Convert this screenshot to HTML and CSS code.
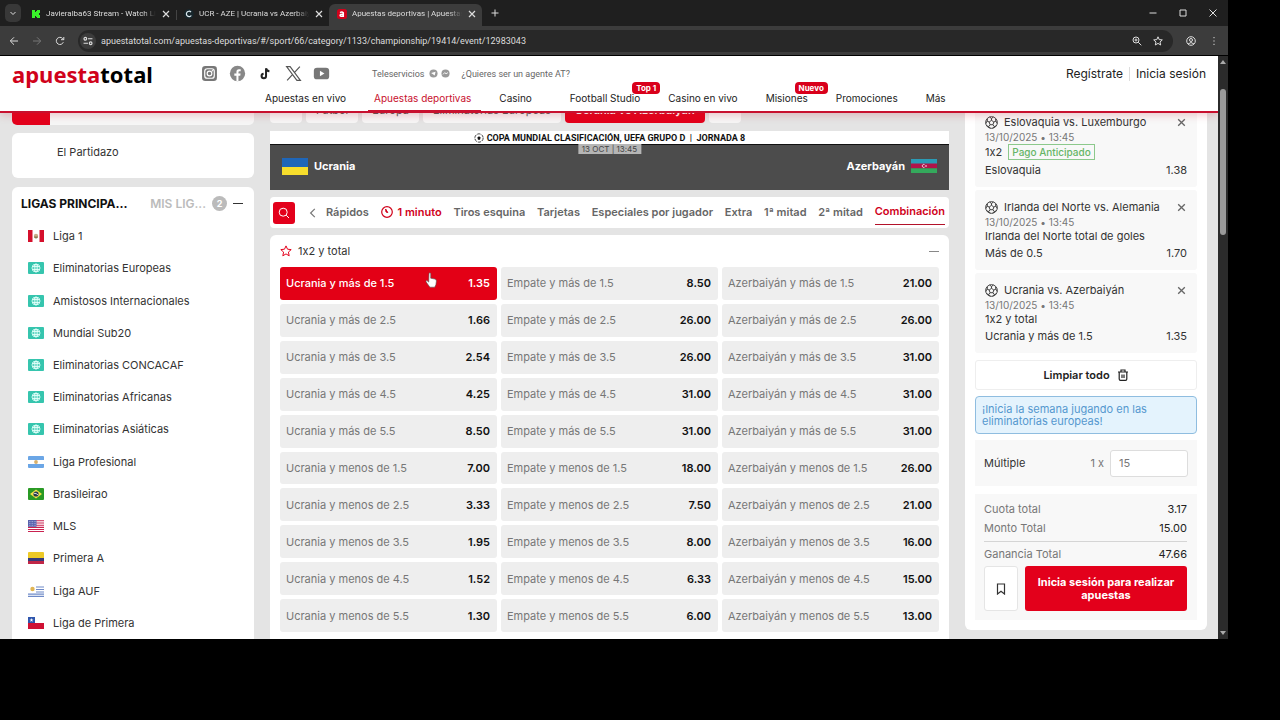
FILE: index.html
```html
<!doctype html>
<html lang="es">
  <head>
    <meta charset="UTF-8" />
    <meta name="viewport" content="width=device-width, initial-scale=1.0" />
    <title>Apuestas deportivas | Apuesta Total</title>
    <link rel="stylesheet" href="styles.css">
  </head>
  <body>
    <!-- shared icons -->
    <svg class="sprite" aria-hidden="true">
      <symbol id="x" viewBox="0 0 10 10"><path d="M2 2l6 6M8 2l-6 6" fill="none" stroke="currentColor" stroke-width="1.2" /></symbol>
      <symbol id="ball" viewBox="0 0 24 24">
        <g fill="none" stroke="currentColor" stroke-width="1.7">
          <circle cx="12" cy="12" r="10.8" />
          <path d="M12 8l4.300 3.100-1.600 5h-5.400l-1.600-5zM12 8V4.500M16.300 11.100l3.700-1.600M14.700 16.100l2.600 3.400M9.300 16.100l-2.600 3.400M7.700 11.100L4 9.500M12 4.500L8.500 2M12 4.500L15.500 2M20 9.500L19.500 5M20 9.500l2.500 4M17.300 19.500l3.700-1.500M17.300 19.500l-3.300 3M6.700 19.500L3 18M6.700 19.500l3.300 3M4 9.500L4.500 5M4 9.500l-2.500 4" />
        </g>
      </symbol>
      <symbol id="world" viewBox="0 0 16 12">
        <rect width="16" height="12" rx="1" fill="#36c5ae" />
        <g fill="none" stroke="#e2fff9" stroke-width=".9"><circle cx="8" cy="6" r="4" /><ellipse cx="8" cy="6" rx="1.800" ry="4" /><path d="M4.500 4.500h7M4.500 7.500h7M8 2v8" /></g>
      </symbol>
      <symbol id="peru" viewBox="0 0 16 12"><rect width="16" height="12" rx="1" fill="#fff" /><path d="M0 0h4.500v12H0zM11.500 0H16v12h-4.500z" fill="#d5102c" /><circle cx="8" cy="6" r="2.200" fill="#c9ad8a" /><path d="M6 6.500a2 2 0 0 0 4 0z" fill="#8a7a52" /></symbol>
      <symbol id="argentina" viewBox="0 0 16 12"><rect width="16" height="12" rx="1" fill="#6ba6e6" /><path d="M0 4h16v4H0z" fill="#fff" /><circle cx="8" cy="6" r="1.900" fill="#d8b06a" /></symbol>
      <symbol id="brasil" viewBox="0 0 16 12"><rect width="16" height="12" rx="1" fill="#299a25" /><path d="M8 1.500L14 6l-6 4.500L2 6z" fill="#efe046" /><circle cx="8" cy="6" r="2.600" fill="#263c4c" /><path d="M5.800 5.300q2.500-.3 4.400 1.700" stroke="#fff" stroke-width=".8" fill="none" /></symbol>
      <symbol id="usa" viewBox="0 0 16 12"><rect width="16" height="12" rx="1" fill="#fff" /><path d="M0 .8h16M0 3h16M0 5.200h16M0 7.400h16M0 9.500h16M0 11.500h16" stroke="#c92250" stroke-width="1.100" /><path d="M0 0h8.500v6.800H0z" fill="#5963ae" /><path d="M1 1.500h7M1 3.400h7M1 5.300h7" stroke="#c9cdee" stroke-width=".7" stroke-dasharray=".8 .8" /></symbol>
      <symbol id="colombia" viewBox="0 0 16 12"><rect width="16" height="12" rx="1" fill="#edc927" /><path d="M0 6h16v3H0z" fill="#343b7c" /><path d="M0 9h16v3H0z" fill="#c02647" /></symbol>
      <symbol id="uruguay" viewBox="0 0 16 12"><rect width="16" height="12" rx="1" fill="#fff" /><path d="M8 2h8M8 4.500h8M8 7h8M0 9.200h16M0 11.300h16" stroke="#6f8ac8" stroke-width="1.200" /><circle cx="4.500" cy="4" r="2.200" fill="#e1b655" /></symbol>
      <symbol id="chile" viewBox="0 0 16 12"><rect width="16" height="12" rx="1" fill="#fff" /><path d="M0 6h16v6H0z" fill="#cf1133" /><path d="M0 0h7v6H0z" fill="#2f56ad" /><path d="M3.500 1l.5 1.400h1.500l-1.200.9.500 1.500-1.300-.9-1.300.9.500-1.500-1.200-.9H3z" fill="#fff" /></symbol>
    </svg>

    <div class="browser">
      <div class="tabs">
        <button class="tab-menu" aria-label="Buscar pestañas"><svg viewBox="0 0 10 10"><path d="M2.500 4L5 6.500 7.500 4" /></svg></button>
        <div class="tab">
          <svg class="favicon" viewBox="0 0 10 10"><path d="M1 1h3v2h1V2h1V1h3v3H8v2h1v3H6V8H5V7H4v2H1z" fill="#39f12a" /></svg>
          <span>Javieralba63 Stream - Watch Live</span>
          <button aria-label="Cerrar"><svg><use href="#x" /></svg></button>
        </div>
        <div class="tab divided">
          <svg class="favicon" viewBox="0 0 10 10"><circle cx="5" cy="5" r="4.800" fill="#17262c" /><path d="M7 3a2.700 2.700 0 1 0 .3 3.500" fill="none" stroke="#dceaf0" stroke-width="1.200" /></svg>
          <span>UCR - AZE | Ucrania vs Azerbaiyán</span>
          <button aria-label="Cerrar"><svg><use href="#x" /></svg></button>
        </div>
        <div class="tab active">
          <svg class="favicon" viewBox="0 0 10 10"><rect width="10" height="10" rx="2.500" fill="#d0021b" /><path d="M3 3.600q2-1.200 3.300.1V8M6.200 5.200Q3 5 3.100 6.500T6.200 6.800" fill="none" stroke="#fff" stroke-width="1.500" /></svg>
          <span>Apuestas deportivas | Apuestas</span>
          <button aria-label="Cerrar"><svg><use href="#x" /></svg></button>
        </div>
        <button class="new-tab" aria-label="Nueva pestaña"><svg viewBox="0 0 10 10"><path d="M5 1.500v7M1.500 5h7" /></svg></button>
        <div class="window-controls">
          <button aria-label="Minimizar"><svg viewBox="0 0 10 10"><path d="M1.500 5h7" /></svg></button>
          <button aria-label="Maximizar"><svg viewBox="0 0 10 10"><path d="M2 2h6v6H2z" /></svg></button>
          <button aria-label="Cerrar ventana"><svg viewBox="0 0 10 10"><path d="M1.500 1.500l7 7M8.500 1.500l-7 7" /></svg></button>
        </div>
      </div>

      <div class="toolbar">
        <button aria-label="Atrás"><svg viewBox="0 0 10 10"><path d="M9 5H1.500M5 1.300L1.300 5 5 8.700" /></svg></button>
        <button class="off" aria-label="Adelante"><svg viewBox="0 0 10 10"><path d="M1 5h7.500M5 1.300L8.700 5 5 8.700" /></svg></button>
        <button aria-label="Recargar"><svg viewBox="0 0 10 10"><path d="M8.300 6.200A3.600 3.600 0 1 1 7.500 2.400L8.700 3.600M8.800 1v2.700H6" /></svg></button>
        <div class="address">
          <svg class="site-info" viewBox="0 0 18 18"><circle cx="9" cy="9" r="9" fill="#3c3c3c" /><g fill="none" stroke="#ddd" stroke-width="1.300"><circle cx="6" cy="6.500" r="1.500" /><path d="M9 6.500h5M4 11.500h5" /><circle cx="12" cy="11.500" r="1.500" /></g></svg>
          <input type="text" aria-label="Dirección" value="apuestatotal.com/apuestas-deportivas/#/sport/66/category/1133/championship/19414/event/12983043" />
          <button aria-label="Zoom"><svg viewBox="0 0 10 10"><circle cx="4" cy="4" r="3" /><path d="M6.200 6.200L9.300 9.300M2.500 4h3M4 2.500v3" /></svg></button>
          <button aria-label="Favorito"><svg viewBox="0 0 10 10"><path d="M5 .8l1.200 2.800 3.100.3L7 6l.7 3L5 7.400 2.300 9 3 6 .7 3.900l3.100-.3z" /></svg></button>
        </div>
        <button aria-label="Perfil"><svg viewBox="0 0 10 10"><circle cx="5" cy="5" r="4.300" /><circle cx="5" cy="4" r="1.500" /><path d="M2 8q3-3 6 0" /></svg></button>
        <button aria-label="Menú"><svg viewBox="0 0 10 10"><path d="M5 1v1.200M5 4.400v1.200M5 7.800V9" /></svg></button>
      </div>

      <div class="viewport">
        <div class="page">
          <header class="header">
            <div class="header-top">
              <a class="logo" href="#">apuesta<span>total</span></a>
              <div class="social">
                <a href="#" aria-label="Instagram"><svg viewBox="0 0 16 16"><rect x="1" y="1" width="14" height="14" rx="3" fill="#777" /><g fill="none" stroke="#fff" stroke-width="1.100"><rect x="3.500" y="3.500" width="9" height="9" rx="2.500" /><circle cx="8" cy="8" r="2.200" /></g><circle cx="10.700" cy="5.300" r=".7" fill="#fff" /></svg></a>
                <a href="#" aria-label="Facebook"><svg viewBox="0 0 16 16"><circle cx="8" cy="8" r="7.200" fill="#888" /><path d="M7 15.200V10H5V8h2V6.500Q7 4 9.300 4H11v1.800H9.700q-.8 0-.8.8V8h2l-.3 2H8.900v5.200z" fill="#fff" /></svg></a>
                <a href="#" aria-label="TikTok"><svg viewBox="0 0 16 16"><path d="M8.500 3v7.300a2.100 2.100 0 1 1-2.300-2.100M8.500 3Q9 5.600 11.700 5.900" fill="none" stroke="#222" stroke-width="1.900" /></svg></a>
                <a href="#" aria-label="X"><svg viewBox="0 0 16 16"><path d="M1.500 1.500h3.300l9.700 13h-3.300zM14 1.500L9 7M7 9l-5 5.500" fill="none" stroke="#555" stroke-width="1.100" /></svg></a>
                <a href="#" aria-label="YouTube"><svg viewBox="0 0 16 16"><rect x=".8" y="2.500" width="14.400" height="11" rx="3" fill="#777" /><path d="M6.500 5.500v5L10.800 8z" fill="#fff" /></svg></a>
              </div>
              <div class="services">
                <span>Teleservicios</span>
                <a href="#" aria-label="Telegram"><svg viewBox="0 0 10 10"><circle cx="5" cy="5" r="4.500" fill="#999" /><path d="M2.300 4.500l5-1.500-1 4.300-1.500-1.200z" fill="#fff" /></svg></a>
                <a href="#" aria-label="Messenger"><svg viewBox="0 0 10 10"><circle cx="5" cy="5" r="4.500" fill="#999" /><path d="M2.300 6l1.800-2 1.500 1.300L7.700 4" fill="none" stroke="#fff" /></svg></a>
                <a class="agent" href="#">¿Quieres ser un agente AT?</a>
              </div>
              <div class="auth">
                <a href="#">Regístrate</a>
                <a href="#">Inicia sesión</a>
              </div>
            </div>
            <nav class="nav">
              <a href="#">Apuestas en vivo</a>
              <a class="current" href="#">Apuestas deportivas</a>
              <a class="wide" href="#">Casino</a>
              <a href="#">Football Studio<em>Top 1</em></a>
              <a href="#">Casino en vivo</a>
              <a href="#">Misiones<em>Nuevo</em></a>
              <a href="#">Promociones</a>
              <a href="#">Más</a>
            </nav>
          </header>

          <main class="columns">
            <aside class="left">
              <div class="search-stub"></div>
              <a class="featured" href="#">El Partidazo</a>
              <section class="leagues">
                <div class="leagues-head">
                  <h2>LIGAS PRINCIPA...</h2>
                  <h2 class="muted">MIS LIG...</h2>
                  <span class="count">2</span>
                  <button class="collapse" aria-label="Contraer"></button>
                </div>
                <ul>
                  <li><a href="#"><svg><use href="#peru" /></svg>Liga 1</a></li>
                  <li><a href="#"><svg><use href="#world" /></svg>Eliminatorias Europeas</a></li>
                  <li><a href="#"><svg><use href="#world" /></svg>Amistosos Internacionales</a></li>
                  <li><a href="#"><svg><use href="#world" /></svg>Mundial Sub20</a></li>
                  <li><a href="#"><svg><use href="#world" /></svg>Eliminatorias CONCACAF</a></li>
                  <li><a href="#"><svg><use href="#world" /></svg>Eliminatorias Africanas</a></li>
                  <li><a href="#"><svg><use href="#world" /></svg>Eliminatorias Asiáticas</a></li>
                  <li><a href="#"><svg><use href="#argentina" /></svg>Liga Profesional</a></li>
                  <li><a href="#"><svg><use href="#brasil" /></svg>Brasileirao</a></li>
                  <li><a href="#"><svg><use href="#usa" /></svg>MLS</a></li>
                  <li><a href="#"><svg><use href="#colombia" /></svg>Primera A</a></li>
                  <li><a href="#"><svg><use href="#uruguay" /></svg>Liga AUF</a></li>
                  <li><a href="#"><svg><use href="#chile" /></svg>Liga de Primera</a></li>
                </ul>
              </section>
            </aside>

            <section class="center">
              <div class="crumbs">
                <a href="#">‹</a>
                <a href="#">Fútbol</a>
                <a href="#">Europa</a>
                <a href="#">Eliminatorias Europeas</a>
                <a class="current" href="#">Ucrania vs Azerbaiyán</a>
                <a href="#" aria-label="Más eventos"></a>
              </div>

              <div class="match">
                <div class="competition">
                  <svg viewBox="0 0 12 12"><circle cx="6" cy="6" r="5" fill="none" stroke="#222" stroke-dasharray="4 1.200" /><path d="M6 4l2 1.500L7.200 8H4.800L4 5.500z" fill="#111" /></svg>
                  COPA MUNDIAL CLASIFICACIÓN, UEFA GRUPO D &nbsp;|&nbsp; JORNADA 8
                </div>
                <div class="teams">
                  <svg viewBox="0 0 26 17"><path d="M0 0h26v9H0z" fill="#1f66b8" /><path d="M0 9h26v8H0z" fill="#f7dd2c" /></svg>
                  <strong>Ucrania</strong>
                  <time>13 OCT | 13:45</time>
                  <strong class="away">Azerbayán</strong>
                  <svg class="flag-az" viewBox="0 0 26 14"><path d="M0 0h26v5H0z" fill="#2b9bb5" /><path d="M0 4.500h26v5H0z" fill="#b01349" /><path d="M0 9.300h26V14H0z" fill="#34a95c" /><path d="M13.500 5.600a1.500 1.500 0 1 0 0 2.600" fill="none" stroke="#fff" stroke-width=".8" /><circle cx="15" cy="7" r=".8" fill="#fff" /></svg>
                </div>
              </div>

              <div class="markets">
                <button class="search" aria-label="Buscar"><svg viewBox="0 0 12 12"><circle cx="5.200" cy="5.200" r="4" /><path d="M8.200 8.200L11 11" /></svg></button>
                <button class="prev" aria-label="Anterior"><svg viewBox="0 0 10 10"><path d="M6.500 1.500L3 5l3.500 3.500" /></svg></button>
                <div class="market-tabs">
                  <button>Rápidos</button>
                  <button class="minute"><svg viewBox="0 0 12 12"><circle cx="6" cy="6" r="5.300" fill="none" stroke="currentColor" stroke-width="1.200" /><path d="M4.600 3l2.200 3.600L5 6z" fill="currentColor" stroke="currentColor" /></svg>1 minuto</button>
                  <button>Tiros esquina</button>
                  <button>Tarjetas</button>
                  <button>Especiales por jugador</button>
                  <button>Extra</button>
                  <button>1ª mitad</button>
                  <button>2ª mitad</button>
                  <button class="selected">Combinación</button>
                </div>
              </div>

              <section class="market">
                <div class="market-head">
                  <svg viewBox="0 0 12 12"><path d="M6 .9l1.500 3.300 3.700.4-2.800 2.500.8 3.700L6 8.900l-3.200 1.900.8-3.700L.8 4.600l3.700-.4z" fill="none" stroke="#e3001b" stroke-linejoin="round" /></svg>
                  <h3>1x2 y total</h3>
                  <button class="collapse" aria-label="Contraer"></button>
                </div>
                <div class="odds">
                  <button class="picked">Ucrania y más de 1.5 <b>1.35</b></button>
                  <button>Empate y más de 1.5 <b>8.50</b></button>
                  <button>Azerbaiyán y más de 1.5 <b>21.00</b></button>

                  <button>Ucrania y más de 2.5 <b>1.66</b></button>
                  <button>Empate y más de 2.5 <b>26.00</b></button>
                  <button>Azerbaiyán y más de 2.5 <b>26.00</b></button>

                  <button>Ucrania y más de 3.5 <b>2.54</b></button>
                  <button>Empate y más de 3.5 <b>26.00</b></button>
                  <button>Azerbaiyán y más de 3.5 <b>31.00</b></button>

                  <button>Ucrania y más de 4.5 <b>4.25</b></button>
                  <button>Empate y más de 4.5 <b>31.00</b></button>
                  <button>Azerbaiyán y más de 4.5 <b>31.00</b></button>

                  <button>Ucrania y más de 5.5 <b>8.50</b></button>
                  <button>Empate y más de 5.5 <b>31.00</b></button>
                  <button>Azerbaiyán y más de 5.5 <b>31.00</b></button>

                  <button>Ucrania y menos de 1.5 <b>7.00</b></button>
                  <button>Empate y menos de 1.5 <b>18.00</b></button>
                  <button>Azerbaiyán y menos de 1.5 <b>26.00</b></button>

                  <button>Ucrania y menos de 2.5 <b>3.33</b></button>
                  <button>Empate y menos de 2.5 <b>7.50</b></button>
                  <button>Azerbaiyán y menos de 2.5 <b>21.00</b></button>

                  <button>Ucrania y menos de 3.5 <b>1.95</b></button>
                  <button>Empate y menos de 3.5 <b>8.00</b></button>
                  <button>Azerbaiyán y menos de 3.5 <b>16.00</b></button>

                  <button>Ucrania y menos de 4.5 <b>1.52</b></button>
                  <button>Empate y menos de 4.5 <b>6.33</b></button>
                  <button>Azerbaiyán y menos de 4.5 <b>15.00</b></button>

                  <button>Ucrania y menos de 5.5 <b>1.30</b></button>
                  <button>Empate y menos de 5.5 <b>6.00</b></button>
                  <button>Azerbaiyán y menos de 5.5 <b>13.00</b></button>
                </div>
              </section>
            </section>

            <aside class="slip">
              <article class="bet">
                <h4><svg><use href="#ball" /></svg>Eslovaquia vs. Luxemburgo<button aria-label="Quitar"><svg><use href="#x" /></svg></button></h4>
                <time>13/10/2025 • 13:45</time>
                <p>1x2 <span class="early">Pago Anticipado</span></p>
                <p class="pick">Eslovaquia <span>1.38</span></p>
              </article>
              <article class="bet">
                <h4><svg><use href="#ball" /></svg>Irlanda del Norte vs. Alemania<button aria-label="Quitar"><svg><use href="#x" /></svg></button></h4>
                <time>13/10/2025 • 13:45</time>
                <p>Irlanda del Norte total de goles</p>
                <p class="pick">Más de 0.5 <span>1.70</span></p>
              </article>
              <article class="bet">
                <h4><svg><use href="#ball" /></svg>Ucrania vs. Azerbaiyán<button aria-label="Quitar"><svg><use href="#x" /></svg></button></h4>
                <time>13/10/2025 • 13:45</time>
                <p>1x2 y total</p>
                <p class="pick">Ucrania y más de 1.5 <span>1.35</span></p>
              </article>

              <button class="clear">Limpiar todo
                <svg viewBox="0 0 12 12"><path d="M1 3h10M4 3V1h4v2M2.200 3v7q0 1.300 1.300 1.300h5q1.300 0 1.300-1.300V3M5 5.500v3.500M7 5.500v3.500" /></svg>
              </button>
              <p class="notice">¡Inicia la semana jugando en las eliminatorias europeas!</p>
              <div class="stake">
                <label for="stake">Múltiple</label>
                <span>1 x</span>
                <input type="text" id="stake" value="15" />
              </div>
              <div class="totals">
                <dl>
                  <div><dt>Cuota total</dt><dd>3.17</dd></div>
                  <div><dt>Monto Total</dt><dd>15.00</dd></div>
                  <div class="win"><dt>Ganancia Total</dt><dd>47.66</dd></div>
                </dl>
                <div class="actions">
                  <button class="save" aria-label="Guardar"><svg viewBox="0 0 12 12"><path d="M2.500 1h7v10L6 8.200 2.500 11z" /></svg></button>
                  <button class="submit">Inicia sesión para realizar apuestas</button>
                </div>
              </div>
            </aside>
          </main>
        </div>
        <div class="scrollbar"><i class="up"></i><div class="thumb"></div><i class="down"></i></div>
      </div>
    </div>

    <svg class="cursor" viewBox="0 0 12 16"><path d="M4 1.200q1-.8 1.700.2v4.800l4.300.9q1.500.4 1.400 2l-.5 3.600-1.200 2.500H4.900L1 9.800q-.3-1.300 1-1.200l1.700 1.500z" fill="#fff" stroke="#555" stroke-width=".6" /></svg>
  </body>
</html>
```

FILE: styles.css
```css
* {
  box-sizing: border-box;
}

body {
  margin: 0;
  height: 100vh;
  padding: 0 52px 81px 0;
  background-color: #000;
  font-family: Inter, "Liberation Sans", sans-serif;
  font-size: 11px;
  line-height: 14px;
  font-feature-settings: "calt" 0;
  color: #333;
}

h2, h3, h4, p, ul, dl, dd {
  margin: 0;
  padding: 0;
}

a {
  color: inherit;
  text-decoration: none;
}

button {
  display: flex;
  align-items: center;
  justify-content: center;
  padding: 0;
  border: none;
  background: none;
  color: inherit;
  font: inherit;
  font-feature-settings: inherit;
  cursor: pointer;
}

svg {
  display: block;
  flex: none;
}

.sprite {
  position: absolute;
  width: 0;
  height: 0;
}

.browser {
  height: 100%;
  display: flex;
  flex-direction: column;
  overflow: hidden;
}

/* browser chrome */
.tabs, .toolbar {
  display: flex;
  align-items: center;
  flex: none;
  color: #ddd;
  font-family: Roboto, sans-serif;
}

.tabs svg, .toolbar svg {
  width: 10px;
  height: 10px;
  fill: none;
  stroke: currentColor;
}

.tabs .favicon {
  stroke: none;
}

.tabs {
  height: 26px;
  padding-left: 5px;
  background-color: #1f1f1f;
  font-size: 8px;
}

.tab-menu {
  width: 16px;
  height: 18px;
  margin-right: 2px;
  border-radius: 5px;
  background-color: #383838;
}

.tab {
  display: flex;
  align-items: center;
  gap: 5px;
  width: 153px;
  height: 22px;
  padding: 0 5px 2px 8px;
  align-self: flex-end;
}

.tab span {
  flex: 1;
  overflow: hidden;
  white-space: nowrap;
  mask-image: linear-gradient(to right, #000 88%, transparent);
}

.tab.divided {
  background: linear-gradient(#444, #444) left center / 1px 10px no-repeat;
}

.tab.active {
  background-color: #3c3c3c;
  border-radius: 6px 6px 0 0;
}

.new-tab {
  margin-left: 8px;
}

.window-controls {
  display: flex;
  gap: 20px;
  margin-left: auto;
  padding-right: 10px;
}

.toolbar {
  height: 30px;
  gap: 13px;
  padding: 0 9px;
  background-color: #3c3c3c;
  border-bottom: 1px solid #000;
  font-size: 9px;
}

.toolbar .off {
  color: #777;
}

.address {
  flex: 1;
  display: flex;
  align-items: center;
  gap: 11px;
  height: 22px;
  padding: 0 10px 0 2px;
  border-radius: 11px;
  background-color: #282828;
}

.address input {
  flex: 1;
  padding: 0;
  margin-left: -6px;
  border: none;
  background: none;
  color: #ddd;
  font: inherit;
}

.address .site-info {
  width: 16px;
  height: 16px;
  stroke: none;
}

.viewport {
  flex: 1;
  min-height: 0;
  display: flex;
}

.page {
  flex: 1;
  display: flex;
  flex-direction: column;
  overflow: hidden;
  background-color: #e4e4e4;
}

.scrollbar {
  width: 10px;
  display: flex;
  flex-direction: column;
  align-items: center;
  padding: 4px 0;
  background-color: #2b2b2b;
}

.thumb {
  width: 6px;
  height: 146px;
  margin: 25px 0 auto;
  border-radius: 3px;
  background-color: #9a9a9a;
}

.up, .down {
  border: 3px solid transparent;
  border-bottom: 4px solid #aaa;
  border-top: none;
}

.down {
  border-top: 4px solid #aaa;
  border-bottom: none;
}

/* site header */
.header {
  flex: none;
  position: relative;
  z-index: 1;
  height: 57px;
  padding: 0 12px;
  background-color: #fff;
  border-bottom: 2px solid #c8102e;
  box-shadow: 0 2px 8px rgba(200, 40, 50, 0.25);
}

.header-top {
  display: flex;
  align-items: center;
  height: 35px;
}

.logo {
  width: 189px;
  color: #d0021b;
  font-family: "Noto Sans", "Open Sans", sans-serif;
  font-size: 22px;
  font-weight: 700;
  line-height: 30px;
}

.logo span {
  color: #000;
}

.social {
  display: flex;
  gap: 11px;
}

.social svg {
  width: 17px;
  height: 17px;
}

.services {
  display: flex;
  align-items: center;
  gap: 3px;
  margin-left: 42px;
  color: #666;
  font-family: Roboto, sans-serif;
  font-size: 9px;
}

.services svg {
  width: 9px;
  height: 9px;
}

.services span {
  margin-right: 2px;
}

.agent {
  margin-left: 8px;
}

.auth {
  display: flex;
  margin-left: auto;
  font-size: 12px;
  color: #222;
}

.auth a + a {
  margin-left: 6px;
  padding-left: 6px;
  border-left: 1px solid #ddd;
}

.nav {
  display: flex;
  gap: 28px;
  padding-left: 253px;
  color: #222;
  font-size: 10px;
}

.nav a {
  position: relative;
  height: 20px;
}

.nav .current {
  color: #c8102e;
}

.nav .current::after {
  content: "";
  position: absolute;
  left: -6px;
  right: -10px;
  bottom: 0;
  height: 1px;
  background-color: #c8102e;
}

.nav .wide {
  margin-right: 10px;
}

.nav em {
  position: absolute;
  right: -20px;
  top: -9px;
  padding: 0 4px;
  border-radius: 4px;
  background-color: #d9001b;
  color: #fff;
  font-size: 8px;
  font-style: normal;
  font-weight: 700;
  line-height: 12px;
  white-space: nowrap;
}

/* page columns */
.columns {
  flex: 1;
  min-height: 0;
  display: grid;
  grid-template-columns: 242px 1fr 242px;
  grid-template-rows: 100%;
  gap: 16px;
  padding: 0 11px 0 12px;
}

.left, .center {
  display: flex;
  flex-direction: column;
  min-width: 0;
}

.search-stub {
  height: 12px;
  border-radius: 0 0 5px 5px;
  background: linear-gradient(to right, #e3001b 38px, #f6f6f6 38px);
}

.featured {
  height: 45px;
  margin: 8px 0 9px;
  padding: 12px 45px;
  border-radius: 6px;
  background-color: #fff;
}

.leagues {
  flex: 1;
  display: flex;
  flex-direction: column;
  border-radius: 6px 6px 0 0;
  background-color: #fff;
}

.leagues-head {
  display: flex;
  align-items: center;
  height: 33px;
  padding: 0 11px 0 9px;
}

.leagues-head h2 {
  flex: 1;
  white-space: nowrap;
  color: #111;
  font-size: 12px;
  font-weight: 700;
}

.leagues-head .muted {
  flex: none;
  color: #bbb;
  font-weight: 600;
}

.count {
  width: 15px;
  height: 15px;
  margin: 0 6px;
  border-radius: 50%;
  background-color: #bbb;
  color: #fff;
  font-size: 9px;
  font-weight: 700;
  line-height: 15px;
  text-align: center;
}

.collapse {
  width: 10px;
  height: 10px;
}

.collapse::before {
  content: "";
  width: 10px;
  height: 1px;
  background-color: currentColor;
}

.leagues ul {
  flex: 1;
  display: grid;
  grid-auto-rows: 1fr;
  list-style: none;
}

.leagues li a {
  display: flex;
  align-items: center;
  gap: 9px;
  height: 100%;
  padding-left: 16px;
}

.leagues li svg {
  width: 16px;
  height: 12px;
}

.crumbs {
  display: flex;
  align-items: flex-end;
  gap: 4px;
  height: 10px;
  overflow: hidden;
}

.crumbs a {
  flex: none;
  min-width: 32px;
  height: 24px;
  padding: 4px 10px;
  border-radius: 4px;
  background-color: #f6f6f6;
  color: #555;
  text-align: center;
}

.crumbs .current {
  background-color: #e3001b;
  color: #fff;
  font-weight: 600;
}

.match {
  margin-top: 8px;
}

.competition {
  display: flex;
  align-items: center;
  justify-content: center;
  gap: 3px;
  height: 13px;
  background-color: #fff;
  color: #111;
  font-family: Roboto, sans-serif;
  font-size: 9px;
  font-weight: 700;
}

.competition svg {
  width: 10px;
  height: 10px;
}

.teams {
  position: relative;
  display: flex;
  align-items: center;
  gap: 6px;
  height: 46px;
  padding: 0 12px 3px;
  border-top: 1px solid #111;
  background-color: #4c4c4c;
  color: #fff;
}

.teams svg {
  width: 26px;
  height: 17px;
}

.teams .flag-az {
  height: 14px;
}

.teams .away {
  margin-left: auto;
}

.teams time {
  position: absolute;
  left: 50%;
  top: -1px;
  transform: translateX(-50%);
  padding: 0 4px;
  background-color: #b5b5b5;
  color: #444;
  font-size: 8px;
  line-height: 10px;
}

.markets {
  display: flex;
  align-items: center;
  height: 31px;
  margin: 7px 0;
  padding: 0 4px 0 3px;
  border-radius: 4px;
  background-color: #fff;
}

.search {
  width: 22px;
  height: 22px;
  border-radius: 3px;
  background-color: #e3001b;
  color: #fff;
}

.search svg, .prev svg {
  width: 12px;
  height: 12px;
  fill: none;
  stroke: currentColor;
}

.prev {
  width: 31px;
  padding-left: 5px;
  color: #777;
}

.market-tabs {
  flex: 1;
  display: flex;
  justify-content: space-between;
  color: #666;
  font-weight: 600;
}

.market-tabs button {
  height: 25px;
  padding-bottom: 2px;
  white-space: nowrap;
}

.market-tabs svg {
  width: 12px;
  height: 12px;
  margin-right: 5px;
}

.market-tabs .minute, .market-tabs .selected {
  color: #d0021b;
}

.market-tabs .selected {
  border-bottom: 1px solid #b3122a;
}

.market {
  flex: 1;
  display: flex;
  flex-direction: column;
  padding: 0 10px 7px;
  border-radius: 6px 6px 0 0;
  background-color: #fff;
}

.market-head {
  display: flex;
  align-items: center;
  gap: 6px;
  height: 32px;
}

.market-head svg {
  width: 12px;
  height: 12px;
}

.market-head h3 {
  flex: 1;
  font-size: 11px;
  font-weight: 400;
}

.market-head .collapse {
  color: #888;
}

.odds {
  flex: 1;
  display: grid;
  grid-template-columns: repeat(3, 1fr);
  grid-auto-rows: 1fr;
  gap: 4px;
}

.odds button {
  justify-content: space-between;
  padding: 0 7px 0 6px;
  border-radius: 3px;
  background-color: #eee;
  color: #777;
}

.odds b {
  color: #111;
  font-weight: 600;
}

.odds .picked {
  background-color: #e30016;
  color: #fff;
  font-weight: 500;
}

.odds .picked b {
  color: #fff;
}

/* bet slip */
.slip {
  align-self: start;
  margin-top: -8px;
  padding: 0 10px 10px;
  border-radius: 0 0 6px 6px;
  background-color: #fff;
}

.bet {
  margin-bottom: 3px;
  padding: 9px 10px 10px;
  border-radius: 3px;
  background-color: #f8f8f8;
}

.bet h4 {
  display: flex;
  align-items: center;
  gap: 6px;
  height: 16px;
  font-weight: 400;
  white-space: nowrap;
}

.bet h4 > svg {
  width: 13px;
  height: 13px;
}

.bet h4 button {
  margin-left: auto;
  color: #666;
}

.bet h4 button svg {
  width: 11px;
  height: 11px;
}

.bet time {
  display: block;
  color: #777;
  font-size: 10px;
}

.pick {
  display: flex;
  justify-content: space-between;
  margin-top: 3px;
}

.early {
  display: inline-block;
  margin-left: 3px;
  padding: 0 3px;
  border: 1px solid #8cc98c;
  color: #66b566;
  font-size: 10px;
  font-weight: 500;
  line-height: 14px;
}

.clear {
  gap: 7px;
  width: 100%;
  height: 30px;
  margin-top: 7px;
  border: 1px solid #eee;
  border-radius: 3px;
  color: #222;
  font-weight: 600;
}

.clear svg, .save svg {
  width: 12px;
  height: 12px;
  fill: none;
  stroke: currentColor;
  stroke-width: 1.2;
}

.notice {
  margin-top: 6px;
  padding: 6px;
  border: 1px solid #8fbde0;
  border-radius: 4px;
  background-color: #e4f3fd;
  color: #5598cf;
  line-height: 12px;
}

.stake {
  display: flex;
  align-items: center;
  height: 46px;
  margin: 6px 0 8px;
  padding: 0 9px;
  background-color: #f8f8f8;
}

.stake label {
  flex: 1;
}

.stake input {
  width: 78px;
  height: 27px;
  margin-left: 6px;
  padding: 0 8px;
  border: 1px solid #ddd;
  border-radius: 3px;
  background-color: #fff;
  color: #777;
  font: inherit;
}

.stake span {
  color: #777;
}

.totals {
  padding: 6px 10px 9px 9px;
  background-color: #f8f8f8;
}

.totals dl div {
  display: flex;
  justify-content: space-between;
  height: 19px;
  line-height: 19px;
  color: #777;
}

.totals dd {
  color: #222;
}

.totals dl .win {
  margin-top: 3px;
  height: 25px;
  padding-top: 3px;
  border-top: 1px solid #d5d5d5;
}

.actions {
  display: flex;
  gap: 7px;
}

.save {
  width: 34px;
  height: 45px;
  border: 1px solid #e5e5e5;
  border-radius: 3px;
  background-color: #fff;
}

.submit {
  flex: 1;
  padding: 0 8px;
  border-radius: 3px;
  background-color: #e3001b;
  color: #fff;
  font-weight: 700;
  line-height: 13px;
}

.cursor {
  position: absolute;
  left: 425px;
  top: 272px;
  width: 12px;
  height: 16px;
}
```
